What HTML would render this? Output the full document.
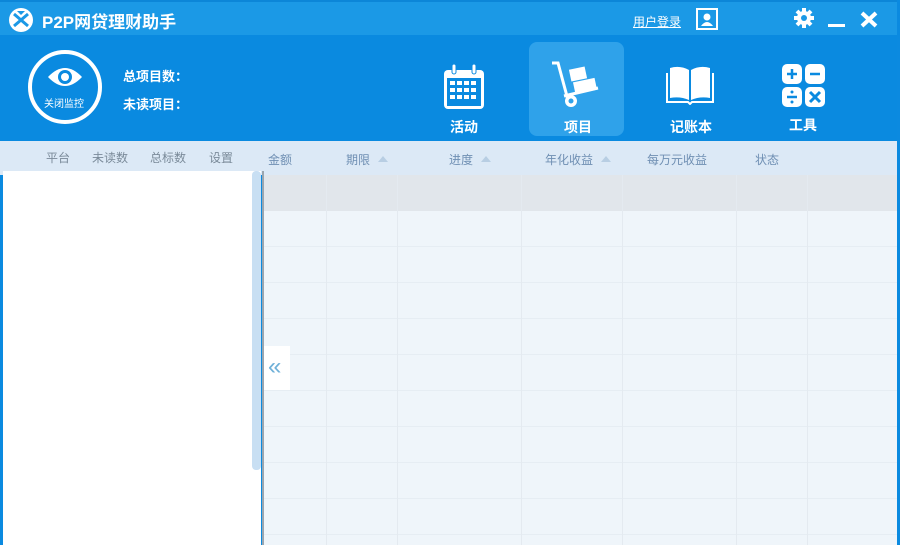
<!DOCTYPE html>
<html><head><meta charset="utf-8"><style>
*{margin:0;padding:0;box-sizing:border-box}
body{width:900px;height:545px;overflow:hidden;background:#0b8ae0;font-family:"Liberation Sans","Noto Sans CJK SC",sans-serif;position:relative}
.abs{position:absolute}
.title{left:0;top:0;width:900px;height:35px;background:#1b99e6;border-top:2px solid #0c86d8}
.head{left:0;top:35px;width:900px;height:106px;background:#0a8ae0}
.t{color:#fff;font-weight:bold}
.colh{left:0;top:141px;width:900px;height:34px;background:#dce9f6}
.ch{font-size:12px;color:#7a8a99;top:149px}
.ch2{font-size:12px;color:#6f8fb3;top:151px}
.tri{width:0;height:0;border-left:5px solid transparent;border-right:5px solid transparent;border-bottom:6px solid #b8cee3;top:156px}
.tab{left:264px;top:175px;width:636px;height:370px;background:#eff5fa}
.nav{font-size:14px;color:#fff;font-weight:bold}
</style></head><body>
<div class="abs title"></div>
<svg class="abs" style="left:8px;top:7px" width="26" height="26" viewBox="0 0 26 26"><circle cx="13" cy="13" r="12" fill="#fff"/><path d="M6 7 L13 13 L6 19 M20 7 L13 13 L20 19" stroke="#1b99e6" stroke-width="3" fill="none"/><path d="M9 4 L13 8 L17 4Z" fill="#1b99e6"/></svg>
<div class="abs t" style="left:42px;top:8px;font-size:17px">P2P网贷理财助手</div>
<div class="abs" style="left:633px;top:13px;font-size:12px;color:#fff;text-decoration:underline">用户登录</div>
<svg class="abs" style="left:696px;top:8px" width="22" height="22" viewBox="0 0 22 22"><rect x="1" y="1" width="20" height="20" fill="none" stroke="#fff" stroke-width="2"/><circle cx="11" cy="9" r="3.5" fill="#fff"/><path d="M5 18 Q11 10 17 18Z" fill="#fff"/></svg>
<svg class="abs" style="left:793px;top:7px" width="22" height="22" viewBox="0 0 22 22"><g stroke="#fff" stroke-width="4"><path d="M11 1V21M1 11H21M4 4L18 18M18 4L4 18"/></g><circle cx="11" cy="11" r="7" fill="#fff"/><circle cx="11" cy="11" r="3" fill="#1b99e6"/></svg>
<div class="abs" style="left:828px;top:24px;width:17px;height:3px;background:#fff"></div>
<svg class="abs" style="left:860px;top:11px" width="18" height="17"><path d="M2 2L16 15M16 2L2 15" stroke="#fff" stroke-width="4"/></svg>
<div class="abs head"></div>
<div class="abs" style="left:28px;top:50px;width:74px;height:74px;border:4px solid #fff;border-radius:50%;"></div>
<svg class="abs" style="left:45px;top:64px" width="40" height="26" viewBox="0 0 40 26"><path d="M3 13 Q20 -5 37 13 Q20 31 3 13Z" fill="#fff"/><circle cx="20" cy="13" r="7" fill="#0a8ae0"/><circle cx="20" cy="13" r="4" fill="#fff"/></svg>
<div class="abs" style="left:44px;top:95px;font-size:10px;color:#fff">关闭监控</div>
<div class="abs t" style="left:123px;top:66px;font-size:13px">总项目数：</div>
<div class="abs t" style="left:123px;top:94px;font-size:13px">未读项目：</div>
<svg class="abs" style="left:443px;top:64px" width="42" height="46" viewBox="0 0 42 46"><rect x="1" y="6" width="40" height="39" rx="4" fill="#fff"/><rect x="4" y="14" width="34" height="28" fill="#0a8ae0"/><g fill="#fff"><rect x="7" y="17" width="5" height="4"/><rect x="14" y="17" width="5" height="4"/><rect x="21" y="17" width="5" height="4"/><rect x="28" y="17" width="5" height="4"/><rect x="7" y="24" width="5" height="4"/><rect x="14" y="24" width="5" height="4"/><rect x="21" y="24" width="5" height="4"/><rect x="28" y="24" width="5" height="4"/><rect x="7" y="31" width="5" height="4"/><rect x="14" y="31" width="5" height="4"/><rect x="21" y="31" width="5" height="4"/><rect x="28" y="31" width="5" height="4"/></g><rect x="9" y="0" width="4" height="10" rx="2" fill="#fff" stroke="#0a8ae0"/><rect x="29" y="0" width="4" height="10" rx="2" fill="#fff" stroke="#0a8ae0"/></svg>
<div class="abs nav" style="left:450px;top:117px">活动</div>
<div class="abs" style="left:529px;top:42px;width:95px;height:94px;background:#2fa2ea;border-radius:8px"></div>
<svg class="abs" style="left:550px;top:60px" width="52" height="50" viewBox="0 0 52 50"><path d="M2 3 L8 3 L18 40 M14 36 L48 28" stroke="#fff" stroke-width="3" fill="none"/><rect x="20" y="8" width="16" height="12" fill="#fff" transform="rotate(-12 28 14)"/><rect x="24" y="20" width="22" height="12" fill="#fff" transform="rotate(-12 35 26)"/><circle cx="21" cy="41" r="6" fill="#fff"/><circle cx="21" cy="41" r="2.5" fill="#2fa2ea"/></svg>
<div class="abs nav" style="left:564px;top:117px">项目</div>
<svg class="abs" style="left:666px;top:65px" width="48" height="40" viewBox="0 0 48 40"><path d="M4 3 Q14 0 23 5 L23 35 Q14 31 4 33Z M44 3 Q34 0 25 5 L25 35 Q34 31 44 33Z" fill="#fff"/><path d="M1 8 L1 37 L22 37 L24 39 L26 37 L47 37 L47 8" stroke="#fff" stroke-width="2" fill="none"/></svg>
<div class="abs nav" style="left:670px;top:117px">记账本</div>
<svg class="abs" style="left:782px;top:64px" width="44" height="44" viewBox="0 0 44 44"><rect x="0" y="0" width="20" height="20" rx="5" fill="#fff"/><rect x="23" y="0" width="20" height="20" rx="5" fill="#fff"/><rect x="0" y="23" width="20" height="20" rx="5" fill="#fff"/><rect x="23" y="23" width="20" height="20" rx="5" fill="#fff"/><path d="M5 10H15M10 5V15M28 10H38M5 33H15" stroke="#0a8ae0" stroke-width="2.5"/><circle cx="10" cy="28" r="1.5" fill="#0a8ae0"/><circle cx="10" cy="38" r="1.5" fill="#0a8ae0"/><path d="M28 28L38 38M38 28L28 38" stroke="#0a8ae0" stroke-width="3"/></svg>
<div class="abs nav" style="left:789px;top:115px">工具</div>
<div class="abs colh"></div>
<div class="abs ch" style="left:46px">平台</div>
<div class="abs ch" style="left:92px">未读数</div>
<div class="abs ch" style="left:150px">总标数</div>
<div class="abs ch" style="left:209px">设置</div>
<div class="abs ch2" style="left:268px">金额</div>
<div class="abs ch2" style="left:346px">期限</div><div class="abs tri" style="left:378px"></div>
<div class="abs ch2" style="left:449px">进度</div><div class="abs tri" style="left:481px"></div>
<div class="abs ch2" style="left:545px">年化收益</div><div class="abs tri" style="left:601px"></div>
<div class="abs ch2" style="left:647px">每万元收益</div>
<div class="abs ch2" style="left:755px">状态</div>
<div class="abs" style="left:3px;top:171px;width:248px;height:374px;background:#fff"></div>
<div class="abs" style="left:251px;top:171px;width:10px;height:374px;background:#fff"></div>
<div class="abs" style="left:252px;top:171px;width:9px;height:299px;background:#c8dff3;border-radius:4px"></div>
<div class="abs" style="left:262px;top:171px;width:2px;height:374px;background:#9aa6b0"></div>
<div class="abs tab"></div>
<div class="abs" style="left:264px;top:175px;width:636px;height:36px;background:#e1e6eb"></div>
<div class="abs" style="left:264px;top:211px;width:636px;height:334px;background:repeating-linear-gradient(to bottom,#eff5fa 0,#eff5fa 35px,#e6edf3 35px,#e6edf3 36px)"></div>
<div class="abs" style="left:326px;top:175px;width:1px;height:370px;background:#e4eaf0"></div>
<div class="abs" style="left:397px;top:175px;width:1px;height:370px;background:#e4eaf0"></div>
<div class="abs" style="left:521px;top:175px;width:1px;height:370px;background:#e4eaf0"></div>
<div class="abs" style="left:622px;top:175px;width:1px;height:370px;background:#e4eaf0"></div>
<div class="abs" style="left:736px;top:175px;width:1px;height:370px;background:#e4eaf0"></div>
<div class="abs" style="left:807px;top:175px;width:1px;height:370px;background:#e4eaf0"></div>
<div class="abs" style="left:264px;top:346px;width:26px;height:44px;background:#fff"></div>
<div class="abs" style="left:268px;top:352px;font-size:24px;color:#6fb0d8;line-height:30px">«</div>
<div class="abs" style="left:897px;top:0;width:3px;height:545px;background:#0b8ae0"></div>
</body></html>
